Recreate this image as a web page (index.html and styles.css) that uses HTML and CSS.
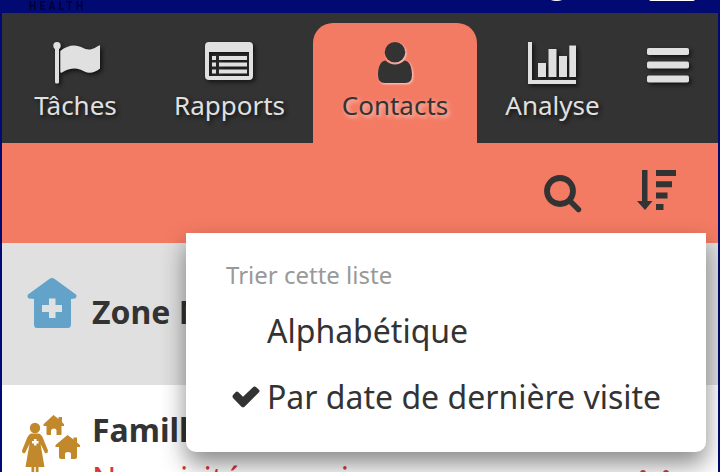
FILE: index.html
```html
<!DOCTYPE html>
<html lang="fr">
<head>
<meta charset="utf-8">
<title>Contacts</title>
<link rel="stylesheet" href="styles.css">
</head>
<body>
<div class="app">
  <header class="brand">
    <span class="brand-name">HEALTH</span>
    <svg class="brand-icons" viewBox="0 0 169 13"><ellipse cx="7.500" cy="-2" rx="8" ry="3"/><rect x="100" y="-8" width="46" height="9" rx="2"/></svg>
  </header>
  <nav class="tabs">
    <a class="tab tasks"><svg class="flag" viewBox="0 0 48 42"><circle cx="4" cy="3.8" r="3.7"/><path d="M2 6h4v34a1.5 1.5 0 0 1-1.5 1.5h-1A1.5 1.5 0 0 1 2 40z"/><path d="M7.300 9Q14 3.500 21 3.500C28 3.500 31 7.500 36 7.500C40 7.500 44 4.500 46 3.400Q47 3 47 4V26.500C44 29 40 31 36 30.800C31 30.500 28 26.500 22 26.500Q15 26.500 9 30.500Q7.300 31.500 7.300 29.500z"/></svg><span>Tâches</span></a>
    <a class="tab reports"><svg viewBox="0 0 48 42"><path fill-rule="evenodd" d="M4 0h40a4 4 0 0 1 4 4v30a4 4 0 0 1-4 4H4a4 4 0 0 1-4-4V4a4 4 0 0 1 4-4zM4 10v24h40V10z"/><path d="M7 14h4v4H7zm7 0h28v4H14zM7 20.500h4v4H7zm7 0h28v4H14zM7 27.500h4v4H7zm7 0h28v4H14z"/></svg><span>Rapports</span></a>
    <a class="tab contacts active"><svg viewBox="0 0 48 42"><circle cx="24" cy="10.300" r="10.300"/><path d="M14.500 18.500Q19 22.500 24 22.500T33.500 18.500C39 19 41 26 41 33Q41 41 34.500 41H13.500Q7 41 7 33C7 26 9 19 14.500 18.500z"/></svg><span>Contacts</span></a>
    <a class="tab analytics"><svg class="chart" viewBox="0 0 48 42"><path d="M0 0h4v38h44v4H0zM10 21h8v14h-8zM20.500 7H28.500v28h-8zM31 14h8v21h-8zM41.300 3.500H48V35h-6.700z"/></svg><span>Analyse</span></a>
    <svg class="burger" viewBox="0 0 42 35"><rect width="42" height="7" rx="1.800"/><rect y="13.500" width="42" height="7" rx="1.800"/><rect y="27.500" width="42" height="7" rx="1.800"/></svg>
  </nav>
  <div class="actions">
    <svg class="search" viewBox="0 0 38 38"><circle cx="16" cy="16" r="13" fill="none" stroke="#333" stroke-width="5.800"/><path d="M25.500 25.500l9 9" stroke="#333" stroke-width="5.400" stroke-linecap="round"/></svg>
    <svg class="sort" viewBox="0 0 40 41"><path d="M5 0H10.500V31H15.500L8 40L0 31H5zM19 0h20v6h-20zM19 11.300H35v6H19zM19 22.500H30.500v6H19zM19 34H26.500v6H19z"/></svg>
  </div>
  <main>
    <section class="row selected">
      <svg class="clinic" viewBox="0 0 50 50"><path fill-rule="evenodd" d="M22 1.200Q25-1 28 1.200L49 16.500Q50.500 18.500 48 20.500L44 21V46.500Q44 50 40.500 50H10Q7 50 7 46.500V21L2 20.500Q-.5 19 1 16.500zM22 20.500V27H15V34H22V40H28.500V34H35V27H28.500V20.500z"/></svg>
      <h2>Zone Nord</h2>
    </section>
    <section class="row family">
      <svg class="household" viewBox="0 0 60 64"><path d="M31.500 0L36.500 4V2H40V7L42 9.300V11H39.500V19Q39.500 20 38.500 20H34.500V15.500Q34.500 13.500 32 13.500T29 15.500V20H25.500Q24.500 20 24.500 19V11H21.500V9.300zM45.500 20L51.500 24.500V22.500H55V27.500L58 30V32H55V42Q55 44 53 44H49V39Q49 37 46 37T43 39V44H39Q37 44 37 42V32H33.500V30z"/><circle cx="13" cy="13" r="5.200"/><path fill-rule="evenodd" d="M9 18.500H17Q19 19 20.500 22L26 35.500Q26 39 23 38L18.500 29L22.500 52H16.500V64H13.800V52H12.200V64H9.500V52H3.500L7.500 29L3 38Q0 39 0 35.500L5.500 22Q7 19 9 18.500zM12 24v2H10v2.500h2v2h2.500v-2h2V26h-2v-2z"/></svg>
      <div class="details"><h2>Famille</h2><p><span>Non visité ce mois</span><svg class="visits" viewBox="0 0 30 30"><rect x="0" y="0" width="6" height="9" rx="3"/><rect x="23" y="0" width="6" height="9" rx="3"/></svg></p></div>
    </section>
  </main>
  <div class="menu">
    <h3>Trier cette liste</h3>
    <div class="option"><span class="mark"></span>Alphabétique</div>
    <div class="option"><span class="mark"><svg viewBox="0 0 28 22"><path d="M1 9L3.800 6Q5 5 6.200 6L11 10.800L21.500 .7Q23 0 24 .9L27.200 4Q28 5 27 6.200L12.500 20.700Q11 22 9.500 20.700L1 12Q0 10.500 1 9z"/></svg></span>Par date de dernière visite</div>
  </div>
</div>
</body>
</html>
```

FILE: styles.css
```css
* { box-sizing: border-box; }
body { margin: 0; overflow: hidden; background: #000a72; color: #333; font-family: "Noto Sans", sans-serif; }
h2, h3, p { margin: 0; }
svg { display: block; flex: none; fill: #333; }
.app { position: relative; height: 472px; padding: 0 2px; overflow: hidden; }
.brand { display: flex; height: 13px; padding-left: 27px; justify-content: space-between; }
.brand-name { height: 12px; color: #000229; font: bold 10px/12px Roboto, sans-serif; letter-spacing: 3.4px; transform: scaleY(1.2); }
.brand-icons { width: 169px; height: 13px; fill: #fff; }
.tabs { display: flex; height: 130px; padding: 10px 0 0 3px; background: #333; }
.tab { display: flex; flex-direction: column; align-items: center; height: 120px; padding-top: 19px; color: #e0e0e0; font-size: 26px; line-height: 36px; text-shadow: 2px 2px 4px #111; }
.tab svg { width: 48px; height: 42px; margin-bottom: 3px; fill: #e0e0e0; filter: drop-shadow(2px 2px 2px #111); }
.tab .flag { margin-left: 3px; }
.tab .chart { margin-right: 1px; }
.tasks { width: 141px; }
.reports { width: 167px; }
.reports svg { margin-right: 2px; }
.contacts { width: 164px; }
.analytics { width: 151px; }
.tab.active { border-radius: 20px 20px 0 0; background: #f47b63; color: #333; text-shadow: 2px 2px 4px #fff9; }
.tab.active svg { fill: #333; filter: drop-shadow(1px 1px 1px #fffa); }
.burger { width: 42px; height: 35px; margin: 25px 0 0 19px; fill: #e0e0e0; filter: drop-shadow(2px 2px 2px #111); }
.actions { display: flex; justify-content: flex-end; height: 100px; padding: 27px 41px 0 0; background: #f47b63; }
.search { width: 38px; height: 38px; margin: 5px 55px 0 0; }
.sort { width: 40px; height: 41px; }
.row { display: flex; background: #fff; }
.row h2 { font-size: 32px; line-height: 44px; white-space: nowrap; }
.selected { height: 142px; padding: 35px 0 0 25px; background: #e0e0e0; }
.selected h2 { margin: 12px 0 0 15px; }
.clinic { width: 50px; height: 50px; fill: #64a3c9; }
.family { height: 120px; padding: 30px 48px 0 20px; }
.household { width: 60px; height: 64px; fill: #c1892c; }
.details { flex: 1; margin: -7px 0 0 10px; }
.details p { display: flex; justify-content: space-between; margin-top: 5px; color: #d93636; font-size: 32px; line-height: 44px; white-space: nowrap; }
.visits { width: 30px; height: 30px; margin-top: 13px; fill: #d93636; }
.menu { position: absolute; top: 233px; left: 186px; width: 520px; height: 219px; padding: 25px 40px 0; border-radius: 0 0 10px 10px; background: #fff; box-shadow: 0 12px 24px #0007; }
.menu h3 { margin-bottom: 6px; color: #999; font-weight: 400; font-size: 24px; line-height: 34px; }
.option { display: flex; align-items: center; height: 66px; margin-left: 6px; font-size: 32px; line-height: 44px; white-space: nowrap; }
.mark { width: 35px; flex: none; }
.mark svg { width: 28px; height: 22px; }
```
